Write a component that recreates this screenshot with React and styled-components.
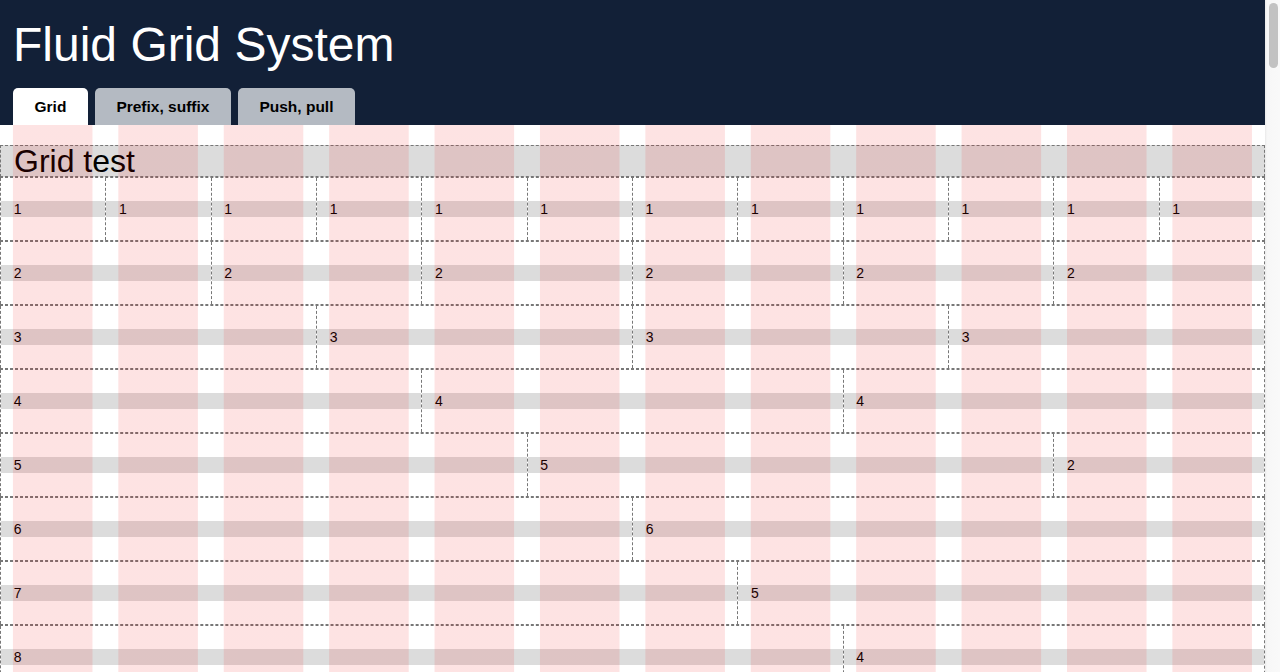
import React from "react";
import styled, { createGlobalStyle } from "styled-components";

const GlobalStyle = createGlobalStyle`
  html, body {
    margin: 0;
    padding: 0;
    background: #fff;
    font-family: "Liberation Sans", Arial, sans-serif;
    color: #000;
  }
`;

const tabs = ["Grid", "Prefix, suffix", "Push, pull"];

const rows = [
  Array(12).fill(1),
  Array(6).fill(2),
  Array(4).fill(3),
  [4, 4, 4],
  [5, 5, 2],
  [6, 6],
  [7, 5],
  [8, 4],
  [9, 3],
  [10, 2],
  [11, 1],
  [12],
];

const App = () => {
  return (
    <>
      <GlobalStyle />
      <Page>
        <Header>
          <Title>Fluid Grid System</Title>
          <Tabs>
            {tabs.map((t, i) => (
              <Tab key={t} active={i === 0}>
                {t}
              </Tab>
            ))}
          </Tabs>
        </Header>
        <Main>
          <Heading>Grid test</Heading>
          {rows.map((row, r) => (
            <Row key={r}>
              {row.map((n, c) => (
                <Cell key={c} span={n}>
                  <Label>{n}</Label>
                </Cell>
              ))}
            </Row>
          ))}
        </Main>
      </Page>
      {/* window scrollbar, as seen in the screenshot */}
      <ScrollTrack>
        <ScrollThumb />
      </ScrollTrack>
    </>
  );
};

export default App;

const Page = styled.div`
  width: calc(100% - 15px);
`;

const ScrollTrack = styled.div`
  position: fixed;
  top: 0;
  right: 0;
  bottom: 0;
  width: 15px;
  box-sizing: border-box;
  background: linear-gradient(90deg, #e9e9e9 0, #f7f7f7 2px, #f9f9f9 100%);
  padding: 3px 2px 0 4px;
`;

const ScrollThumb = styled.div`
  height: 65px;
  border-radius: 5px;
  background: #c2c2c2;
`;

const Header = styled.div`
  background: #122037;
  padding: 17px 13px 0;
`;

const Title = styled.h1`
  margin: 0;
  font-size: 48px;
  line-height: 55px;
  font-weight: normal;
  color: #fff;
`;

const Tabs = styled.div`
  display: flex;
  gap: 7px;
  margin-top: 16px;
`;

const Tab = styled.div`
  height: 37px;
  display: flex;
  align-items: center;
  padding: 0 21.5px;
  border-radius: 5px 5px 0 0;
  font-size: 15.5px;
  font-weight: bold;
  background: ${(p) => (p.active ? "#fff" : "#b4bac2")};
`;

const Main = styled.div`
  position: relative;
  padding: 20px 0 40px;

  &::after {
    content: "";
    position: absolute;
    inset: 0;
    pointer-events: none;
    background-image: linear-gradient(
      90deg,
      transparent 12%,
      rgba(240, 0, 0, 0.11) 12%,
      rgba(240, 0, 0, 0.11) 88%,
      transparent 88%
    );
    background-size: calc(100% / 12) 100%;
    background-repeat: repeat-x;
  }
`;

const Heading = styled.h2`
  margin: 0;
  font-size: 32px;
  line-height: 30px;
  font-weight: normal;
  padding-left: 13px;
  background: #dcdcdc;
  border: 1px dashed #777;
`;

const Row = styled.div`
  display: flex;
  border: 1px dashed #777;
  border-left: none;
`;

const Cell = styled.div`
  box-sizing: border-box;
  flex: 0 0 calc(100% * ${(p) => p.span} / 12);
  border-left: 1px dashed #777;
  padding: 23px 0;
`;

const Label = styled.p`
  margin: 0;
  font-size: 14px;
  line-height: 16px;
  padding-left: 12.65px;
  background: #dcdcdc;
`;
